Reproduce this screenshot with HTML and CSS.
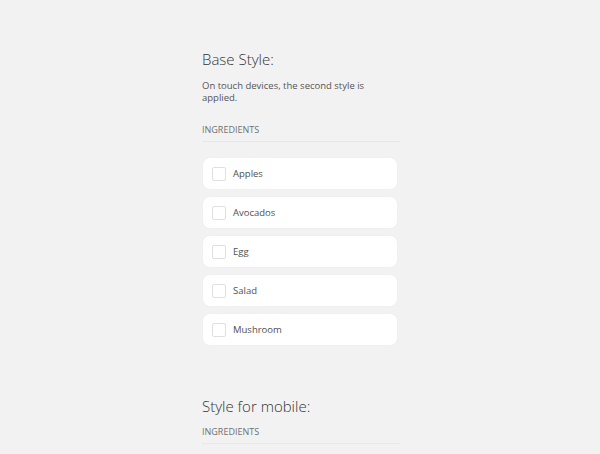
FILE: index.html
```html
<!DOCTYPE html>
<html>
<head>
<meta charset="utf-8">
<link rel="stylesheet" href="styles.css">
</head>
<body>
<main class="page">
  <section class="block">
    <h2 class="title">Base Style:</h2>
    <p class="desc">On touch devices, the second style is applied.</p>
    <div class="label">INGREDIENTS</div>
    <ul class="list">
      <li class="card"><span class="box"></span><span class="name">Apples</span></li>
      <li class="card"><span class="box"></span><span class="name">Avocados</span></li>
      <li class="card"><span class="box"></span><span class="name">Egg</span></li>
      <li class="card"><span class="box"></span><span class="name">Salad</span></li>
      <li class="card"><span class="box"></span><span class="name">Mushroom</span></li>
    </ul>
  </section>
  <section class="block mobile">
    <h2 class="title">Style for mobile:</h2>
    <div class="label">INGREDIENTS</div>
  </section>
</main>
</body>
</html>
```
FILE: styles.css
```css
html, body {
  margin: 0;
  padding: 0;
  background: #f2f2f2;
  font-family: "Open Sans", "Noto Sans", sans-serif;
  color: #333;
}
.page {
  width: 198px;
  margin: 0 auto;
  padding-top: 48px;
  padding-left: 2px;
}
.title {
  margin: 0;
  font-size: 15px;
  font-weight: 300;
  color: #333;
  line-height: 22px;
}
.desc {
  margin: 10px 0 0;
  font-size: 9.5px;
  line-height: 12px;
  color: #555;
  padding-right: 30px;
}
.label {
  margin-top: 20px;
  font-size: 9px;
  line-height: 12px;
  color: #707070;
  padding-bottom: 5px;
  border-bottom: 1px solid #e8e8e8;
}
.list {
  list-style: none;
  margin: 15px 0 0;
  padding: 0;
  display: flex;
  flex-direction: column;
  gap: 6px;
  width: 196px;
}
.card {
  height: 33px;
  box-sizing: border-box;
  background: #fff;
  border: 1px solid #f0f0f0;
  border-radius: 8px;
  display: flex;
  align-items: center;
  padding-left: 9px;
}
.box {
  width: 14px;
  height: 14px;
  box-sizing: border-box;
  border: 1px solid #e0e0e0;
  border-radius: 2px;
  background: #fff;
}
.name {
  margin-left: 7px;
  font-size: 9.5px;
  color: #505050;
}
.mobile {
  margin-top: 49px;
}
.mobile .label {
  margin-top: 9px;
}
```
